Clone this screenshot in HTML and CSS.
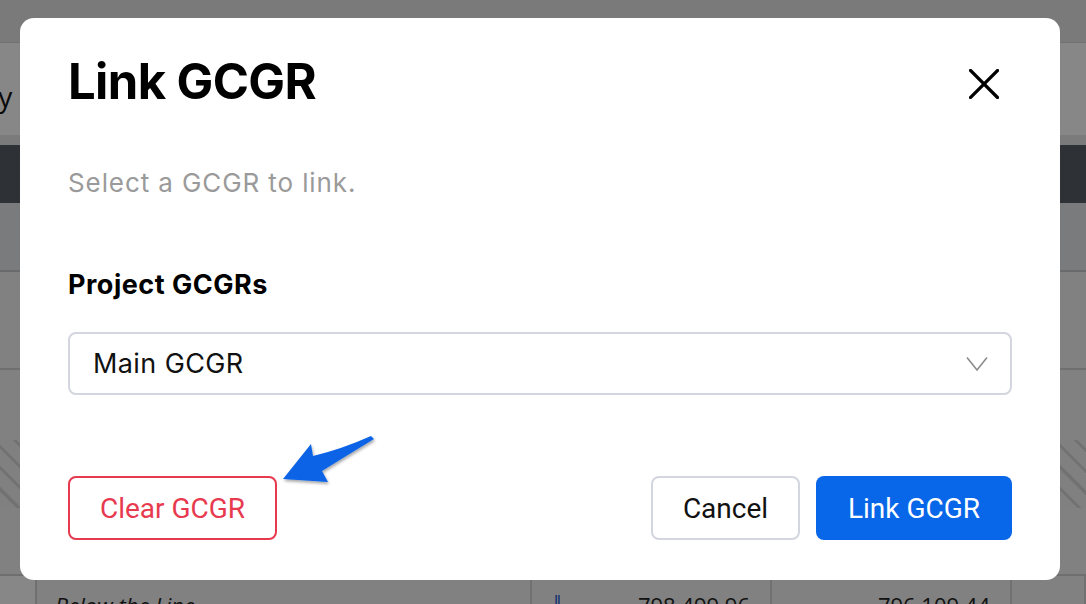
FILE: index.html
```html
<!DOCTYPE html>
<html lang="en">

<head>
    <meta charset="UTF-8">
    <meta name="viewport" content="width=device-width, initial-scale=1.0">
    <title>Link GCGR</title>
    <link rel="stylesheet" href="styles.css">
</head>

<body>
    <div class="page">
        <div class="page-top"></div>
        <div class="page-head"><span class="page-head-text">Summary</span></div>
        <div class="page-gap"></div>
        <div class="page-bar"></div>
        <div class="table-head"></div>
        <div class="table-row row-tall"></div>
        <div class="table-row row-mid"></div>
        <div class="table-hatch"></div>
        <div class="table-row row-fill"></div>
        <div class="table-row row-last">
            <div class="cell cell-name">Below the Line</div>
            <div class="cell cell-num"><span class="cell-icon">Ⅱ</span>798,499.96</div>
            <div class="cell cell-num">796,109.44</div>
            <div class="cell cell-end"></div>
        </div>
    </div>

    <div class="modal-mask"></div>
    <div class="modal">
        <div class="modal-header">
            <h1 class="modal-title">Link GCGR</h1>
            <a href="javascript:;" class="modal-close">
                <svg width="30" height="30" viewBox="0 0 30 30">
                    <path d="M1.5 1.5 L28.5 28.5 M28.5 1.5 L1.5 28.5" stroke="#000" stroke-width="3.2" stroke-linecap="square" fill="none" />
                </svg>
            </a>
        </div>
        <p class="modal-desc">Select a GCGR to link.</p>
        <div class="field-label">Project GCGRs</div>
        <div class="select">
            <span class="select-value">Main GCGR</span>
            <svg class="select-arrow" width="22" height="16" viewBox="0 0 22 16">
                <path d="M1 1.5 L11 14 L21 1.5" stroke="#8c8c8c" stroke-width="1.6" fill="none" />
            </svg>
        </div>
        <div class="modal-footer">
            <a href="javascript:;" class="btn btn-danger">Clear GCGR</a>
            <div class="footer-right">
                <a href="javascript:;" class="btn btn-default">Cancel</a>
                <a href="javascript:;" class="btn btn-primary">Link GCGR</a>
            </div>
        </div>
    </div>

    <!-- 标注箭头 -->
    <svg class="pointer" width="1086" height="604" viewBox="0 0 1086 604">
        <defs>
            <filter id="shade" x="-20%" y="-20%" width="140%" height="140%">
                <feDropShadow dx="1" dy="2" stdDeviation="1.5" flood-color="#000" flood-opacity="0.35" />
            </filter>
        </defs>
        <path filter="url(#shade)" fill="#0a63e6"
            d="M283 479 L311 444 L313 456 Q342 449 371 436 L374 439 Q346 456 322 471 L328 482 Z" />
    </svg>
</body>

</html>
```

FILE: styles.css
```css
* {
    margin: 0;
    padding: 0;
    box-sizing: border-box;
}

body {
    font-family: Inter, "Noto Sans", sans-serif;
    background-color: #fff;
    overflow: hidden;
}

a {
    text-decoration: none;
    color: #000;
}

/* 背景页面 */
.page {
    width: 1086px;
    height: 604px;
    overflow: hidden;
}

.page-top {
    height: 42px;
    background-color: #e6e6e6;
}

.page-head {
    height: 93px;
    background-color: #ffffff;
    display: flex;
    align-items: center;
    border-top: 1px solid #d6d6d6;
}

.page-head-text {
    font-family: "Open Sans", sans-serif;
    font-size: 28px;
    color: #111;
    margin-left: -113px;
    padding-top: 14px;
}

.page-gap {
    height: 10px;
    background-color: #e8e8e8;
}

.page-bar {
    height: 58px;
    background-color: #575d66;
}

.table-head {
    height: 69px;
    background-color: #e6e8ec;
    border-bottom: 2px solid #c8c8c8;
}

.table-row {
    background-color: #f4f4f4;
    border-bottom: 2px solid #d2d2d2;
}

.row-tall {
    height: 98px;
}

.row-mid {
    height: 70px;
    border-bottom: 0;
}

.table-hatch {
    height: 68px;
    background: repeating-linear-gradient(45deg, #f2f2f2 0, #f2f2f2 12px, #d8d8d8 12px, #d8d8d8 15px);
}

.row-fill {
    height: 68px;
}

.row-last {
    height: 40px;
    display: flex;
    border-bottom: 0;
    border-left: 2px solid #d2d2d2;
    margin-left: 35px;
}

.cell {
    font-family: "Open Sans", sans-serif;
    font-size: 22px;
    color: #222;
    padding-top: 14px;
    border-right: 2px solid #d6d6d6;
}

.cell-name {
    width: 495px;
    padding-left: 18px;
    font-style: italic;
}

.cell-num {
    width: 240px;
    text-align: right;
    padding-right: 20px;
}

.cell-icon {
    color: #1f5bd6;
    font-size: 14px;
    float: left;
    padding-left: 22px;
}

.cell-end {
    flex: 1;
}

.modal-mask {
    position: fixed;
    top: 0;
    left: 0;
    width: 100%;
    height: 100%;
    background: rgba(0, 0, 0, .47);
}

/* 弹出框 */
.modal {
    position: fixed;
    top: 18px;
    left: 20px;
    width: 1040px;
    height: 562px;
    background-color: #fff;
    border-radius: 14px;
    padding: 34px 48px 40px 48px;
}

.modal-header {
    display: flex;
    justify-content: space-between;
    align-items: center;
    height: 60px;
}

.modal-title {
    font-size: 49px;
    font-weight: 700;
    line-height: 60px;
    color: #000;
    letter-spacing: -0.6px;
}

.modal-close {
    display: block;
    width: 30px;
    height: 30px;
    margin-right: 13px;
    margin-top: 4px;
}

.modal-desc {
    margin-top: 55px;
    font-size: 26px;
    line-height: 32px;
    color: #9a9a9a;
    letter-spacing: 0.9px;
}

.field-label {
    margin-top: 70px;
    font-size: 27px;
    font-weight: 700;
    line-height: 32px;
    color: #000;
    letter-spacing: 0.5px;
}

.select {
    margin-top: 31px;
    height: 63px;
    border: 2px solid #d3d6de;
    border-radius: 8px;
    display: flex;
    align-items: center;
    justify-content: space-between;
    padding: 0 22px 0 23px;
}

.select-value {
    font-size: 27px;
    color: #111;
    letter-spacing: 0.4px;
}

.modal-footer {
    margin-top: 81px;
    display: flex;
    justify-content: space-between;
}

.footer-right {
    display: flex;
    gap: 16px;
}

.btn {
    display: flex;
    align-items: center;
    justify-content: center;
    height: 64px;
    border-radius: 8px;
    font-family: Roboto, "Liberation Sans", sans-serif;
    font-size: 28px;
}

.btn-danger {
    width: 209px;
    border: 2px solid #e83a4f;
    color: #e83a4f;
}

.btn-default {
    width: 149px;
    border: 2px solid #d3d6de;
    color: #111;
}

.btn-primary {
    width: 196px;
    background-color: #0866e8;
    color: #fff;
}

.pointer {
    position: fixed;
    top: 0;
    left: 0;
    pointer-events: none;
}
```
